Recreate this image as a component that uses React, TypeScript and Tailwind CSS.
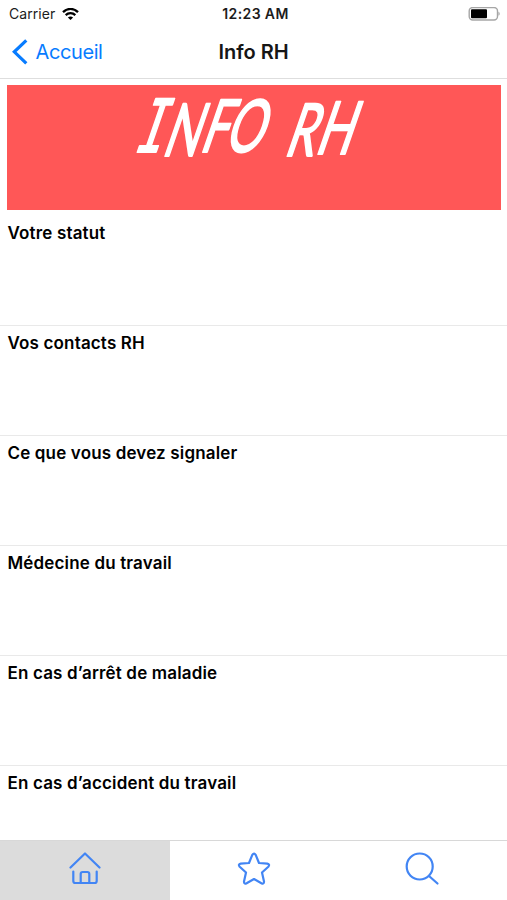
const sections = [
  "Votre statut",
  "Vos contacts RH",
  "Ce que vous devez signaler",
  "Médecine du travail",
  "En cas d’arrêt de maladie",
  "En cas d’accident du travail",
];

function StatusBar() {
  return (
    <div className="grid h-7 grid-cols-3 items-center pl-[9px] pr-[7px] text-[14px] leading-5 text-[#1c1c1c]">
      <div className="flex items-center gap-[7px]">
        <span className="tracking-[0.05px]">Carrier</span>
        <svg className="h-[13px] w-[17px]" viewBox="0 0 17 13" fill="none" stroke="#000" strokeWidth="2.3">
          <path d="M1 4.1C5.2-.1 11.8-.1 16 4.1" />
          <path d="M3.7 7.1c2.7-2.6 6.9-2.6 9.6 0" />
          <path d="M8.5 12.1 5.9 9.4c1.5-1.3 3.7-1.3 5.2 0z" fill="#000" stroke="none" />
        </svg>
      </div>
      <span className="whitespace-nowrap pl-[2px] text-center font-semibold tracking-[0.4px]">12:23 AM</span>
      <svg className="h-[15px] w-8 justify-self-end" viewBox="0 0 32 15" fill="none">
        <rect x="1.2" y=".5" width="28.3" height="12.5" rx="3.5" stroke="#a6a6a6" strokeWidth="1.4" />
        <rect x="3" y="2.3" width="16" height="9" rx="1" fill="#000" />
        <path d="M30.5 4.8c1.5.7 1.5 3.3 0 4z" fill="#999" />
      </svg>
    </div>
  );
}

function NavBar() {
  return (
    <header className="grid h-[51px] grid-cols-3 items-center border-b border-[#dedede] pb-[3px] text-xl">
      <button type="button" className="flex items-center gap-2 pl-[11.5px] text-[#087cff]">
        <svg className="h-[26px] w-4" viewBox="0 0 16 26" fill="none" stroke="currentColor" strokeWidth="3.2">
          <path d="M14.3 1.3 2.3 12.8 14.3 24.3" />
        </svg>
        <span className="tracking-[-0.4px]">Accueil</span>
      </button>
      <h1 className="text-center font-semibold text-[#161616]">Info RH</h1>
    </header>
  );
}

function Banner() {
  return (
    <div className="ml-[7px] mr-1.5 mt-1.5 h-[125px] bg-[#ff5757]">
      <svg
        className="h-[125px] w-full overflow-visible"
        viewBox="0 0 494 125"
        fill="#fff"
        stroke="#fff"
        strokeWidth="2"
        strokeLinejoin="round"
      >
        <text
          transform="translate(126 66) skewX(-19) scale(.64 1)"
          x="0 46 103 141 190 237 284"
          y="1 5 1 1 1 5 3"
          className="font-['Lato'] text-[73px]"
        >
          <tspan className="font-['DejaVu_Sans_Mono']">I</tspan>NFO RH
        </text>
      </svg>
    </div>
  );
}

function TabBar() {
  return (
    <nav className="grid h-[60px] flex-none grid-cols-[170px_1fr_1fr] border-t border-[#d8d8d8] text-[#4285f4]">
      <button type="button" aria-label="Accueil" className="flex justify-center bg-[#dcdcdc] pt-[11px]">
        <svg className="h-9 w-9" viewBox="0 0 36 36" fill="none" stroke="currentColor" strokeWidth="2.2" strokeLinecap="round" strokeLinejoin="round">
          <path d="M3.5 15.5 18 1.5l14.5 14" />
          <path d="M6.3 19.5V29q0 2 2 2h19.4q2 0 2-2v-9.5" />
          <path d="M13.7 31V22q0-2 2-2h4.6q2 0 2 2v9" />
        </svg>
      </button>
      <button type="button" aria-label="Favoris" className="flex justify-center pr-px pt-[11px]">
        <svg className="h-9 w-9" viewBox="0 0 36 36" fill="none" stroke="currentColor" strokeWidth="2.2" strokeLinejoin="round">
          <path d="M16.3 2.9Q18 .3 19.7 2.9L23 11l8.3.7q3 .6 1 3L26 20.5l2 9q.1 3-2.6 1.7L18 27l-7.4 4.2Q7.9 32.5 8 29.5l2-9-6.3-5.8q-2-2.4 1-3L13 11z" />
        </svg>
      </button>
      <button type="button" aria-label="Rechercher" className="flex justify-center pr-[2px] pt-[11px]">
        <svg className="h-9 w-9" viewBox="0 0 36 36" fill="none" stroke="currentColor" strokeWidth="2.2" strokeLinecap="round">
          <circle cx="15.7" cy="14.5" r="13" />
          <path d="m25 24 8.5 7.500" />
        </svg>
      </button>
    </nav>
  );
}

export default function App() {
  return (
    <div className="flex h-screen w-full flex-col overflow-hidden bg-white font-['Inter',sans-serif]">
      <StatusBar />
      <NavBar />
      <main className="min-h-0 flex-1 overflow-hidden">
        <Banner />
        <ul className="mt-1.5">
          {sections.map((section) => (
            <li
              key={section}
              className="h-[110px] border-b border-[#e9e9e9] px-[7.5px] pt-[5px] text-[17px] font-semibold leading-6 tracking-[0.16px] text-black"
            >
              {section}
            </li>
          ))}
        </ul>
      </main>
      <TabBar />
    </div>
  );
}
